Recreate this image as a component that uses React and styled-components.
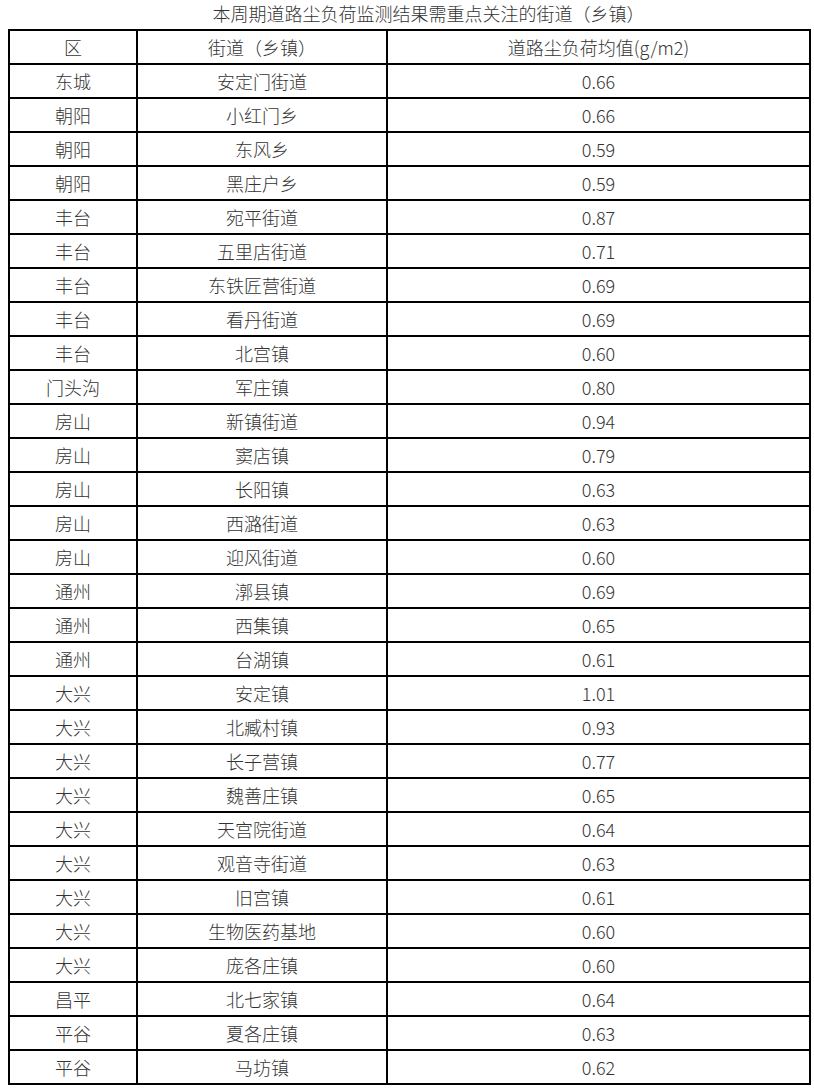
import React from "react";
import styled, { createGlobalStyle } from "styled-components";

const Global = createGlobalStyle`
  html, body { margin: 0; padding: 0; background: #fff; }
  body { font-family: "Noto Sans CJK SC", "Noto Sans", sans-serif; color: #333; }
`;

const Page = styled.div`
  padding: 0 5px 0 8px;
`;

const Title = styled.div`
  height: 29px;
  line-height: 26px;
  font-size: 18px;
  font-weight: 300;
  text-align: center;
  padding-left: 40px;
  color: #333;
`;

const Table = styled.table`
  width: 801px;
  border-collapse: collapse;
  table-layout: fixed;
  font-size: 18px;
  font-weight: 300;
  color: #333;
`;

const Col = styled.col`
  width: ${(p) => p.$w}px;
`;

const Cell = styled.td`
  border: 2px solid #000;
  height: 32px;
  padding: 0;
  text-align: center;
  vertical-align: middle;
  line-height: 32px;
  white-space: nowrap;
`;

const data = [
  ["东城", "安定门街道", "0.66"],
  ["朝阳", "小红门乡", "0.66"],
  ["朝阳", "东风乡", "0.59"],
  ["朝阳", "黑庄户乡", "0.59"],
  ["丰台", "宛平街道", "0.87"],
  ["丰台", "五里店街道", "0.71"],
  ["丰台", "东铁匠营街道", "0.69"],
  ["丰台", "看丹街道", "0.69"],
  ["丰台", "北宫镇", "0.60"],
  ["门头沟", "军庄镇", "0.80"],
  ["房山", "新镇街道", "0.94"],
  ["房山", "窦店镇", "0.79"],
  ["房山", "长阳镇", "0.63"],
  ["房山", "西潞街道", "0.63"],
  ["房山", "迎风街道", "0.60"],
  ["通州", "漷县镇", "0.69"],
  ["通州", "西集镇", "0.65"],
  ["通州", "台湖镇", "0.61"],
  ["大兴", "安定镇", "1.01"],
  ["大兴", "北臧村镇", "0.93"],
  ["大兴", "长子营镇", "0.77"],
  ["大兴", "魏善庄镇", "0.65"],
  ["大兴", "天宫院街道", "0.64"],
  ["大兴", "观音寺街道", "0.63"],
  ["大兴", "旧宫镇", "0.61"],
  ["大兴", "生物医药基地", "0.60"],
  ["大兴", "庞各庄镇", "0.60"],
  ["昌平", "北七家镇", "0.64"],
  ["平谷", "夏各庄镇", "0.63"],
  ["平谷", "马坊镇", "0.62"],
];

export default function App() {
  return (
    <>
      <Global />
      <Page>
        <Title>本周期道路尘负荷监测结果需重点关注的街道（乡镇）</Title>
        <Table>
          <colgroup>
            <Col $w={128} />
            <Col $w={250} />
            <Col $w={423} />
          </colgroup>
          <tbody>
            <tr>
              <Cell>区</Cell>
              <Cell>街道（乡镇）</Cell>
              <Cell>道路尘负荷均值(g/m2)</Cell>
            </tr>
            {data.map((r, i) => (
              <tr key={i}>
                <Cell>{r[0]}</Cell>
                <Cell>{r[1]}</Cell>
                <Cell>{r[2]}</Cell>
              </tr>
            ))}
          </tbody>
        </Table>
      </Page>
    </>
  );
}
